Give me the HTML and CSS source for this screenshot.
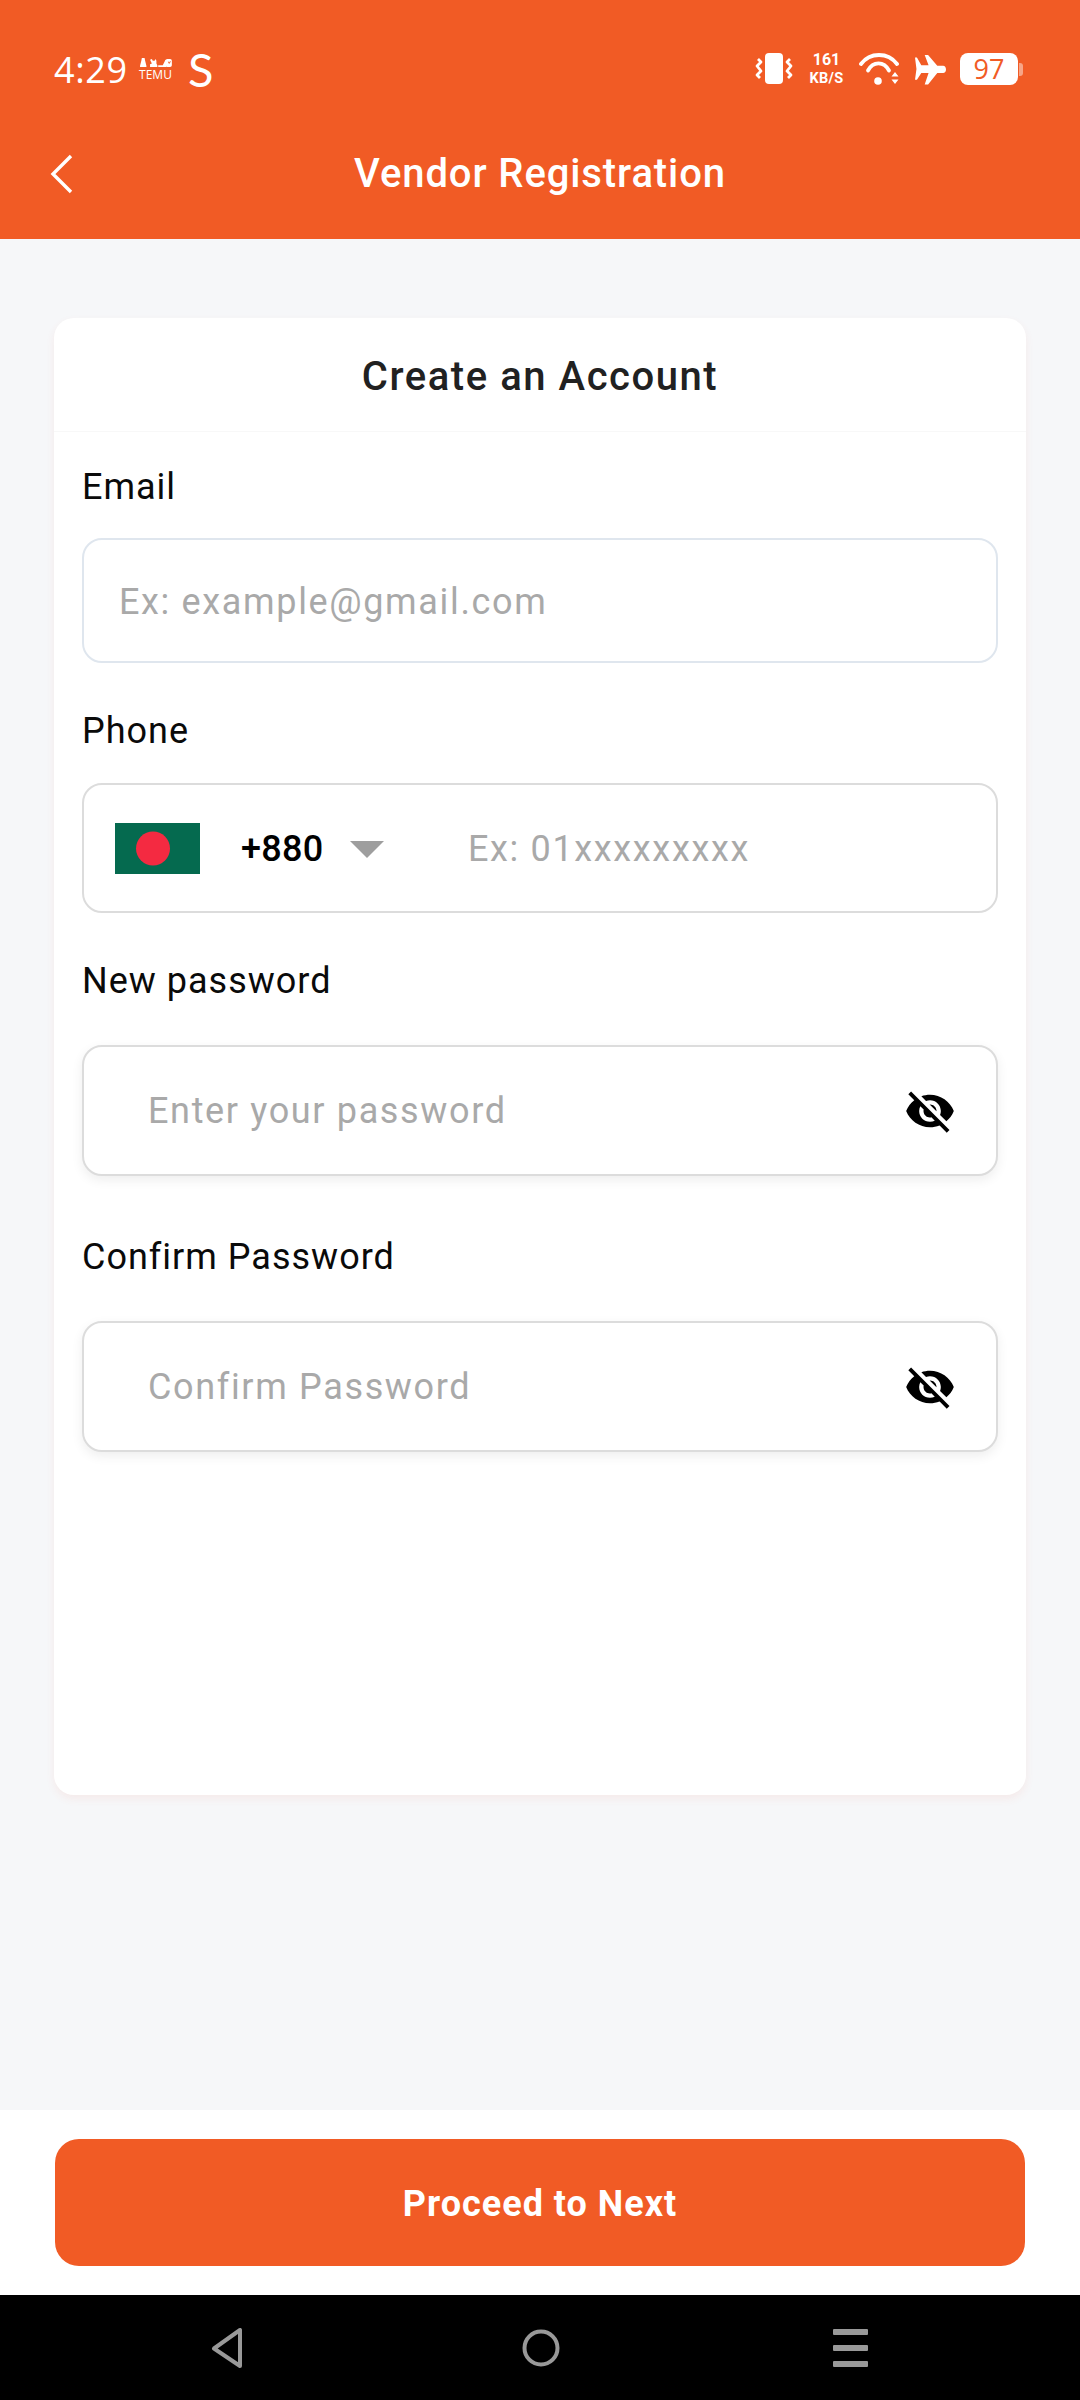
FILE: index.html
```html
<!DOCTYPE html>
<html lang="en">
<head>
<meta charset="utf-8">
<title>Vendor Registration</title>
<link rel="stylesheet" href="styles.css">
</head>
<body>
<div class="screen">
  <header class="header">
    <div class="status">
      <div class="status-left">
        <span class="time">4:29</span>
        <span class="temu">
          <svg class="temu-icons" width="35" height="10" viewBox="0 0 36 11" fill="#fff">
            <path d="M3 0h3l.6 3L8 8.5V10H1V8.500L2.400 3z"/>
            <path d="M12 2l2-1 1 2h2l1-2 1 2v3l1 2v2h-8V7l2-1z"/>
            <path d="M21 8h5l3-6 1 .6V10h-9z"/>
            <path fill-rule="evenodd" d="M31 1h3a2 2 0 0 1 2 2v5a2 2 0 0 1-2 2h-3a2 2 0 0 1-2-2V3a2 2 0 0 1 2-2zm.5 3L33 6.500 35 3.800 34 3.500 33 5l-.8-1.200z"/>
          </svg>
          <span class="temu-word">TEMU</span>
        </span>
        <span class="s-logo">S</span>
      </div>
      <div class="status-right">
        <svg class="vibrate" width="40" height="32" viewBox="0 0 40 32" fill="none" stroke="#fff" stroke-width="2.800" stroke-linejoin="round">
          <rect x="11" y="0" width="18" height="31" rx="4" fill="#fff" stroke="none"/>
          <path d="M4 6l3 3-4 4 4 5-4 4 3 3"/>
          <path d="M36 6l-3 3 4 4-4 5 4 4-3 3"/>
        </svg>
        <span class="speed"><span class="speed-value">161</span><span class="speed-unit">KB/S</span></span>
        <svg class="wifi" width="40" height="32" viewBox="0 0 40 32" fill="none" stroke="#fff" stroke-width="3.800" stroke-linecap="round">
          <path d="M2 11C11 -1 29 -1 38 11"/>
          <path d="M9 17.500C14 8 25 8 30 17.500"/>
          <circle cx="19" cy="28" r="3.800" fill="#fff" stroke="none"/>
          <path d="M36 19l-3.500 4.500h7zM36 31l-3.500-4.500h7z" fill="#fff" stroke="none"/>
        </svg>
        <svg class="plane" width="31" height="31" viewBox="0 0 32 31" fill="#fff">
          <path d="M0 3l2 .0 4.500 8H14L10 0.500h3.500L23 11.500h6c1.800 0 3 1.700 3 4s-1.200 3.500-3 3.500h-6L13.500 31H10l4-12H6.500L2 26H0l1.500-11z"/>
        </svg>
        <span class="battery"><span class="battery-body">97</span><span class="battery-cap"></span></span>
      </div>
    </div>
    <div class="appbar">
      <svg class="back" width="24" height="40" viewBox="0 0 24 40" fill="none" stroke="#fff" stroke-width="3.400">
        <path d="M22 2L4 20l18 18"/>
      </svg>
      <h1 class="title">Vendor Registration</h1>
    </div>
  </header>

  <main class="content">
    <section class="card">
      <h2 class="card-title">Create an Account</h2>
      <form class="form">
        <label class="label label-email">Email</label>
        <div class="field field-email"><span class="placeholder">Ex: example@gmail.com</span></div>

        <label class="label label-phone">Phone</label>
        <div class="field field-phone">
          <svg class="flag" width="85" height="51" viewBox="0 0 85 51">
            <rect width="85" height="51" fill="#056a4f"/>
            <circle cx="38" cy="25.500" r="17" fill="#f42a41"/>
          </svg>
          <span class="code">+880</span>
          <span class="caret"></span>
          <span class="placeholder phone-ph">Ex: 01xxxxxxxxx</span>
        </div>

        <label class="label label-pass">New password</label>
        <div class="field field-pass">
          <span class="placeholder">Enter your password</span>
          <svg class="eye" width="52" height="52" viewBox="0 0 24 24" fill="#000"><path d="M12 7c2.760 0 5 2.240 5 5 0 .65-.13 1.260-.36 1.830l2.920 2.920c1.510-1.260 2.700-2.890 3.430-4.750-1.730-4.390-6-7.500-11-7.500-1.400 0-2.740.25-3.980.7l2.160 2.160C10.740 7.130 11.350 7 12 7zM2 4.270l2.280 2.280.46.46C3.080 8.300 1.780 10.020 1 12c1.730 4.390 6 7.500 11 7.500 1.550 0 3.030-.3 4.380-.84l.42.42L19.730 22 21 20.730 3.270 3 2 4.270zM7.530 9.800l1.550 1.550c-.05.21-.08.43-.08.65 0 1.660 1.340 3 3 3 .22 0 .44-.03.65-.08l1.550 1.550c-.67.33-1.410.53-2.200.53-2.760 0-5-2.240-5-5 0-.79.2-1.530.53-2.200zm4.310-.78l3.150 3.150.02-.16c0-1.660-1.340-3-3-3l-.17.010z"/></svg>
        </div>

        <label class="label label-confirm">Confirm Password</label>
        <div class="field field-pass">
          <span class="placeholder">Confirm Password</span>
          <svg class="eye" width="52" height="52" viewBox="0 0 24 24" fill="#000"><path d="M12 7c2.760 0 5 2.240 5 5 0 .65-.13 1.260-.36 1.830l2.920 2.920c1.510-1.260 2.700-2.890 3.430-4.750-1.730-4.390-6-7.500-11-7.500-1.400 0-2.740.25-3.980.7l2.160 2.160C10.740 7.130 11.350 7 12 7zM2 4.270l2.280 2.280.46.46C3.080 8.300 1.780 10.020 1 12c1.730 4.390 6 7.500 11 7.500 1.550 0 3.030-.3 4.380-.84l.42.42L19.730 22 21 20.730 3.270 3 2 4.270zM7.530 9.800l1.550 1.550c-.05.21-.08.43-.08.65 0 1.660 1.340 3 3 3 .22 0 .44-.03.65-.08l1.550 1.550c-.67.33-1.410.53-2.200.53-2.760 0-5-2.240-5-5 0-.79.2-1.530.53-2.200zm4.310-.78l3.150 3.150.02-.16c0-1.660-1.340-3-3-3l-.17.010z"/></svg>
        </div>
      </form>
    </section>
  </main>

  <div class="footer">
    <button class="next" type="button">Proceed to Next</button>
  </div>

  <nav class="navbar">
    <svg class="nav-back" width="32" height="40" viewBox="0 0 32 40" fill="none" stroke="#999" stroke-width="4" stroke-linejoin="round"><path d="M29 2v36L3 20.500z"/></svg>
    <svg width="38" height="38" viewBox="0 0 38 38" fill="none" stroke="#999" stroke-width="4"><circle cx="19" cy="19" r="16.500"/></svg>
    <svg width="35" height="38" viewBox="0 0 35 38" fill="#999"><rect x="0" y="0" width="35" height="6" rx="1"/><rect x="0" y="16" width="35" height="6" rx="1"/><rect x="0" y="32" width="35" height="6" rx="1"/></svg>
  </nav>
</div>
</body>
</html>
```

FILE: styles.css
```css
* { box-sizing: border-box; }
html, body { margin: 0; padding: 0; }
body { font-family: Roboto, "Liberation Sans", sans-serif; background: #f6f7f9; }
.screen { width: 1080px; height: 2400px; display: flex; flex-direction: column; overflow: hidden; }

.header { height: 239px; background: #f15b25; color: #fff; flex: none; }
.status { height: 140px; padding: 50px 57px 0 54px; display: flex; justify-content: space-between; align-items: flex-start; }
.status-left { display: flex; align-items: center; height: 40px; }
.time { font-family: "Open Sans", sans-serif; font-size: 36px; line-height: 40px; letter-spacing: 0.6px; width: 84px; }
.temu { display: flex; flex-direction: column; align-items: center; width: 35px; gap: 1px; margin-top: -2px; }
.temu-icons { display: block; }
.temu-word { font-family: "Open Sans", sans-serif; font-size: 12px; line-height: 12px; font-weight: 400; }
.s-logo { font-family: "Lato", sans-serif; font-size: 47px; line-height: 40px; margin-left: 15px; margin-top: -2px; }

.status-right { display: flex; align-items: center; height: 32px; margin-top: 3px; }
.vibrate { margin-right: 14px; }
.speed { display: flex; flex-direction: column; align-items: center; gap: 1px; font-family: Roboto, sans-serif; font-weight: 700; width: 37px; margin-right: 14px; }
.speed-value { font-size: 16px; line-height: 18px; }
.speed-unit { font-size: 14.500px; line-height: 17px; letter-spacing: 0.3px; white-space: nowrap; }
.wifi { margin-right: 16px; }
.plane { margin-right: 14px; }
.battery { display: flex; align-items: center; }
.battery-body { width: 58px; height: 32px; background: #fff; border-radius: 8px; color: #f15b25; font-family: "Open Sans", sans-serif; font-size: 27px; line-height: 32px; text-align: center; }
.battery-cap { width: 4px; height: 13px; background: rgba(255,255,255,.45); border-radius: 0 3px 3px 0; margin-left: 1px; }

.appbar { height: 99px; position: relative; display: flex; align-items: flex-start; justify-content: center; }
.back { position: absolute; left: 49px; top: 14px; }
.title { margin: 0; font-size: 40px; font-weight: 500; line-height: 48px; color: #fff; margin-top: 10px; letter-spacing: 0.9px; }

.content { flex: 1; padding: 79px 54px 0; min-height: 0; }
.card { height: 1477px; background: #fff; border-radius: 20px; box-shadow: 0 4px 8px rgba(240, 90, 60, .08); }
.card-title { margin: 0; height: 114px; border-bottom: 1px solid #f8f8f8; font-size: 40px; font-weight: 500; line-height: 118px; text-align: center; color: #212121; letter-spacing: 1.55px; }
.form { padding: 0 28px; display: flex; flex-direction: column; }
.label { display: block; font-size: 36px; line-height: 40px; color: #0a0a0a; letter-spacing: 1px; }
.label-email { margin-top: 35px; margin-bottom: 31px; }
.label-phone { margin-top: 48px; margin-bottom: 32px; }
.label-pass { margin-top: 48px; margin-bottom: 44px; }
.label-confirm { margin-top: 61px; margin-bottom: 44px; }

.field { width: 916px; background: #fff; display: flex; align-items: center; border: 2px solid #dcdcdc; border-radius: 20px; }
.placeholder { font-size: 36px; color: #a9a9a9; letter-spacing: 1.65px; }
.field-email { height: 125px; padding-left: 35px; padding-top: 2px; border-color: #dfe6ee; }
.field-phone { height: 130px; padding-left: 31px; padding-top: 1px; }
.flag { flex: none; margin-top: -1px; }
.code { font-size: 36px; font-weight: 500; color: #000; margin-left: 41px; width: 109px; letter-spacing: 0.3px; }
.caret { width: 0; height: 0; border-left: 17px solid transparent; border-right: 17px solid transparent; border-top: 17px solid #9e9e9e; margin-top: 1px; }
.phone-ph { margin-left: 84px; }
.field-pass { height: 131px; padding-left: 64px; padding-right: 40px; justify-content: space-between; box-shadow: 0 4px 12px rgba(0,0,0,.07); }
.eye { flex: none; }

.footer { height: 185px; flex: none; background: #fff; padding: 29px 55px 0; }
.next { display: block; width: 970px; height: 127px; padding: 3px 0 0; border: 0; border-radius: 24px; background: #f15b25; color: #fff; font-family: Roboto, sans-serif; font-size: 36px; font-weight: 700; letter-spacing: 1px; }

.navbar { height: 105px; flex: none; background: #000; display: flex; justify-content: space-between; align-items: center; padding: 0 212px 0 211px; }
.nav-back { margin-right: 6px; }
```
